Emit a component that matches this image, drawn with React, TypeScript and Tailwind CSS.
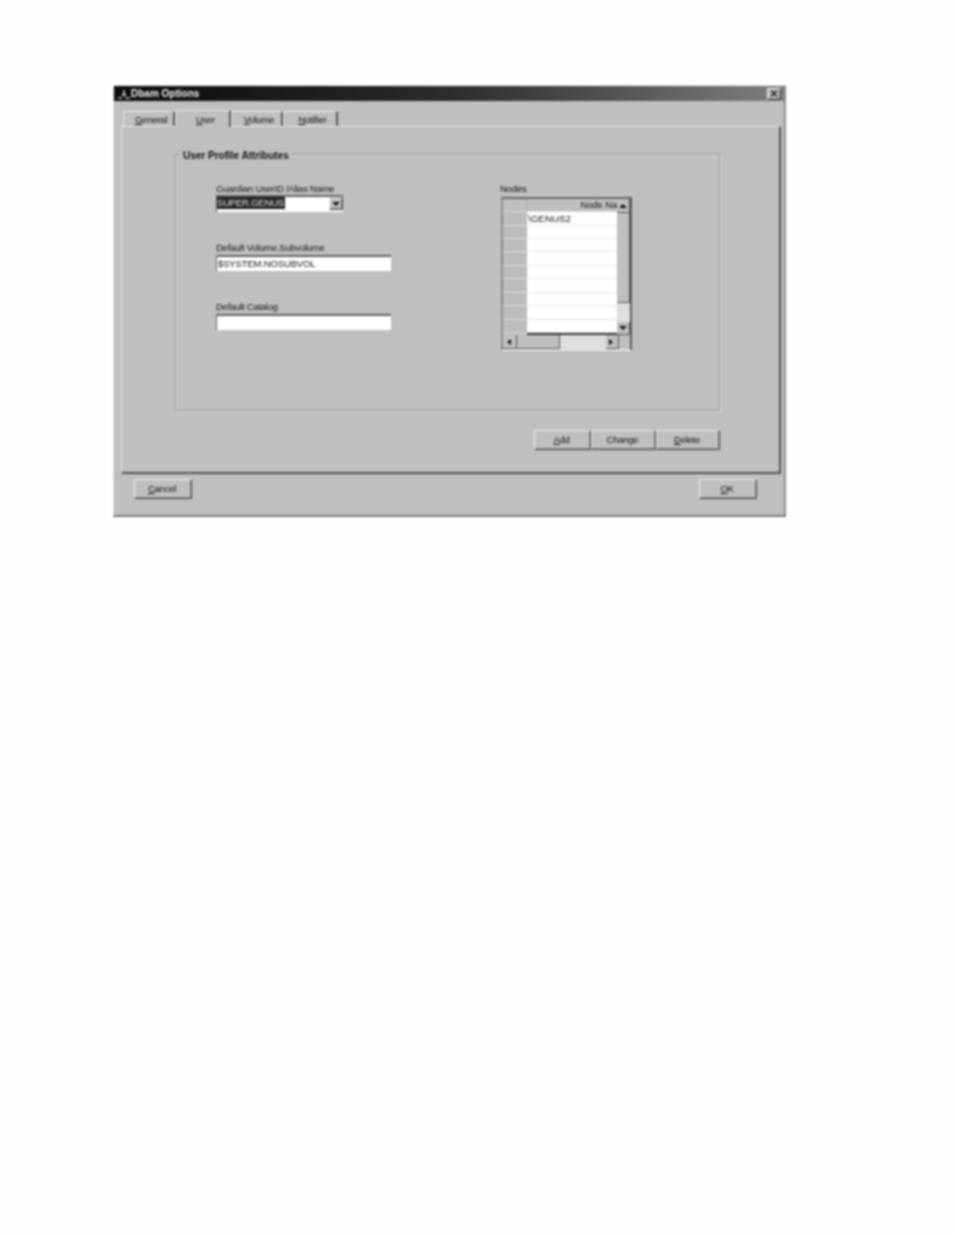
const raised =
  'bg-[#bfbfbf] border border-t-[#eeeeee] border-l-[#eeeeee] border-r-[#4a4a4a] border-b-[#4a4a4a] shadow-[inset_-1px_-1px_0_#8a8a8a]';
const scrollPart = 'bg-[#bfbfbf] border-r border-b border-r-[#555555] border-b-[#555555]';
const sunken = 'bg-white border-t-2 border-l border-t-[#5f5f5f] border-l-[#5f5f5f]';
const small = 'text-[9.5px] tracking-[-0.25px] text-[#111111]';

function Arrow({ dir }: { dir: 'up' | 'down' | 'left' | 'right' }) {
  const points = {
    up: '4,1 8,5 0,5',
    down: '0,1 8,1 4,5',
    left: '1,3 5,0 5,6',
    right: '1,0 5,3 1,6',
  }[dir];
  return (
    <svg width="8" height="6" viewBox="0 0 8 6" className="shrink-0">
      <polygon points={points} fill="#111" />
    </svg>
  );
}

function Tab({ label, rest, active, width }: { label: string; rest: string; active?: boolean; width: string }) {
  return (
    <div
      className={`${width} flex items-center justify-center border-t border-l border-t-[#e8e8e8] border-l-[#e8e8e8] border-r-2 border-r-[#555555] ${small} rounded-t-[2px] ${
        active ? 'h-[17px] pt-[2px] pl-[6px] relative z-10 mb-[-1px] bg-[#bfbfbf]' : 'h-[15px] pt-0.5 pl-[5px]'
      }`}
    >
      <span>
        <u>{label}</u>
        {rest}
      </span>
    </div>
  );
}

function Btn({ label, rest, width }: { label: string; rest: string; width: string }) {
  return (
    <button className={`${width} h-[20px] pr-[2px] ${raised} ${small}`}>
      <u>{label}</u>
      {rest}
    </button>
  );
}

function Field({ label, value, top }: { label: string; value: string; top: string }) {
  return (
    <div className={top}>
      <div className={`h-[14px] leading-[13px] ${small}`}>{label}</div>
      <div className={`w-[175px] h-[16px] ${sunken} text-[9.5px] tracking-[-0.15px] leading-[13px] text-[#111111] pl-[1px]`}>{value}</div>
    </div>
  );
}

function NodesGrid() {
  const rows = ['\\GENUS2', '', '', '', '', '', '', '', ''];
  return (
    <div className="w-[131px] h-[154px] border-2 border-t-[#666666] border-l-[#8a8a8a] border-r-[#5a5a5a] border-b-[#e2e2e2] flex flex-col bg-[#bfbfbf]">
      <div className="flex flex-1 min-h-0">
        <div className="w-[116px] flex flex-col">
          <div className="flex h-[13px] border-b border-[#dddddd]">
            <div className="w-[24px] border-r border-[#aaaaaa]" />
            <div className="flex-1 text-right text-[9.5px] tracking-[-0.1px] leading-[12px] text-[#111111] whitespace-nowrap overflow-hidden">Node Na</div>
          </div>
          {rows.map((row, i) => (
            <div key={i} className="flex h-[13.55px]">
              <div className="w-[24px] bg-[#bcbcbc] border-b border-[#dddddd]" />
              <div className="flex-1 bg-white border-b border-[#e0e0e0] text-[9.8px] leading-[13px] pl-[1px] text-[#111111]">{row}</div>
            </div>
          ))}
          <div className="flex-1 border-t-2 border-[#333333] ml-[24px]" />
        </div>
        <div className="w-[13px] flex flex-col">
          <div className={`h-[14px] ${scrollPart} flex items-center justify-center`}>
            <Arrow dir="up" />
          </div>
          <div className={`h-[90px] ${scrollPart}`} />
          <div className="flex-1 bg-[#dedede]" />
          <div className={`h-[13px] ${scrollPart} flex items-center justify-center`}>
            <Arrow dir="down" />
          </div>
        </div>
      </div>
      <div className="h-[14px] flex">
        <div className={`w-[14px] ${scrollPart} flex items-center justify-center`}>
          <Arrow dir="left" />
        </div>
        <div className={`w-[43px] ${scrollPart}`} />
        <div className="w-[46px] bg-[#dedede]" />
        <div className={`w-[13px] ${scrollPart} flex items-center justify-center`}>
          <Arrow dir="right" />
        </div>
      </div>
    </div>
  );
}

export default function App() {
  return (
    <div className="min-h-[1235px] bg-[#fefefe] pt-[85px] pl-[113px] font-['Liberation_Sans',Arial,sans-serif]">
      <div className="w-[673px] h-[432px] blur-[0.85px] bg-[#bfbfbf] border-t border-t-[#e8e8e8] border-l border-l-[#dddddd] border-r-2 border-r-[#8a8a8a] border-b-2 border-b-[#777777] flex flex-col">
        {/* title bar */}
        <div className="h-[15px] bg-gradient-to-r from-[#0c0c0c] via-[#2c2c2c] to-[#808080] flex items-center pl-[3px] pr-[3px] shrink-0">
          <svg width="14" height="12" viewBox="0 0 14 12" className="shrink-0">
            <path d="M7 2v5M5 7h4" stroke="#dddddd" strokeWidth="1.5" fill="none" />
            <path d="M1 10h4M8 10h5" stroke="#bbbbbb" strokeWidth="1.5" fill="none" />
          </svg>
          <span className="text-[10px] font-bold text-[#f2f2f2] leading-none">Dbam Options</span>
          <div className={`ml-auto w-[14px] h-[12px] ${raised} flex items-center justify-center`}>
            <svg width="8" height="7" viewBox="0 0 8 7">
              <path d="M1 0.5l6 6M7 0.5l-6 6" stroke="#111" strokeWidth="1.4" />
            </svg>
          </div>
        </div>

        {/* tabs */}
        <div className="flex items-end h-[25px] pl-[9px] shrink-0">
          <Tab label="G" rest="eneral" width="w-[52px]" />
          <Tab label="U" rest="ser" width="w-[56px]" active />
          <Tab label="V" rest="olume" width="w-[52px]" />
          <Tab label="N" rest="otifier" width="w-[55px]" />
        </div>

        {/* tab page */}
        <div className="ml-[7px] w-[660px] h-[348px] shrink-0 border border-t-[#e4e4e4] border-l-[#e4e4e4] border-r-2 border-r-[#4f4f4f] border-b-2 border-b-[#4f4f4f] pt-[27px] pl-[53px]">
          <div className="relative w-[545px] h-[257px] border border-[#8f8f8f] shadow-[1px_1px_0_#e2e2e2,inset_1px_1px_0_#dedede] flex">
            <div className="absolute left-[5px] top-[-5px] bg-[#bfbfbf] px-[2px] text-[10px] leading-[12px] font-bold text-[#111111]">
              User Profile Attributes
            </div>

            <div className="w-[324px] pl-[40px] pt-[27px]">
              <div className={`h-[13px] leading-[13px] ${small}`}>Guardian UserID /Alias Name</div>
              <div className={`w-[127px] h-[17px] ${sunken} flex items-start`}>
                <span className="w-[68px] h-[12px] bg-[#222222] text-[9.5px] leading-[12px] text-[#e8e8e8] tracking-[-0.2px] whitespace-nowrap">SUPER.GENUS</span>
                <div className={`ml-auto w-[14px] h-[13px] ${raised} flex items-center justify-center`}>
                  <Arrow dir="down" />
                </div>
              </div>
              <Field label="Default Volume.Subvolume" value="$SYSTEM.NOSUBVOL" top="mt-[29px]" />
              <Field label="Default Catalog" value="" top="mt-[29px]" />
            </div>

            <div className="pt-[27px]">
              <div className={`h-[15px] leading-[13px] ${small}`}>Nodes</div>
              <div className="ml-[1px]">
                <NodesGrid />
              </div>
            </div>
          </div>

          <div className="w-[545px] mt-[19px] flex justify-end">
            <Btn label="A" rest="dd" width="w-[57px]" />
            <Btn label="" rest="Change" width="w-[65px]" />
            <Btn label="D" rest="elete" width="w-[64px]" />
          </div>
        </div>

        {/* dialog buttons */}
        <div className="flex justify-between pl-[20px] pr-[27px] pt-[5px]">
          <Btn label="C" rest="ancel" width="w-[58px]" />
          <Btn label="O" rest="K" width="w-[58px]" />
        </div>
      </div>
    </div>
  );
}
